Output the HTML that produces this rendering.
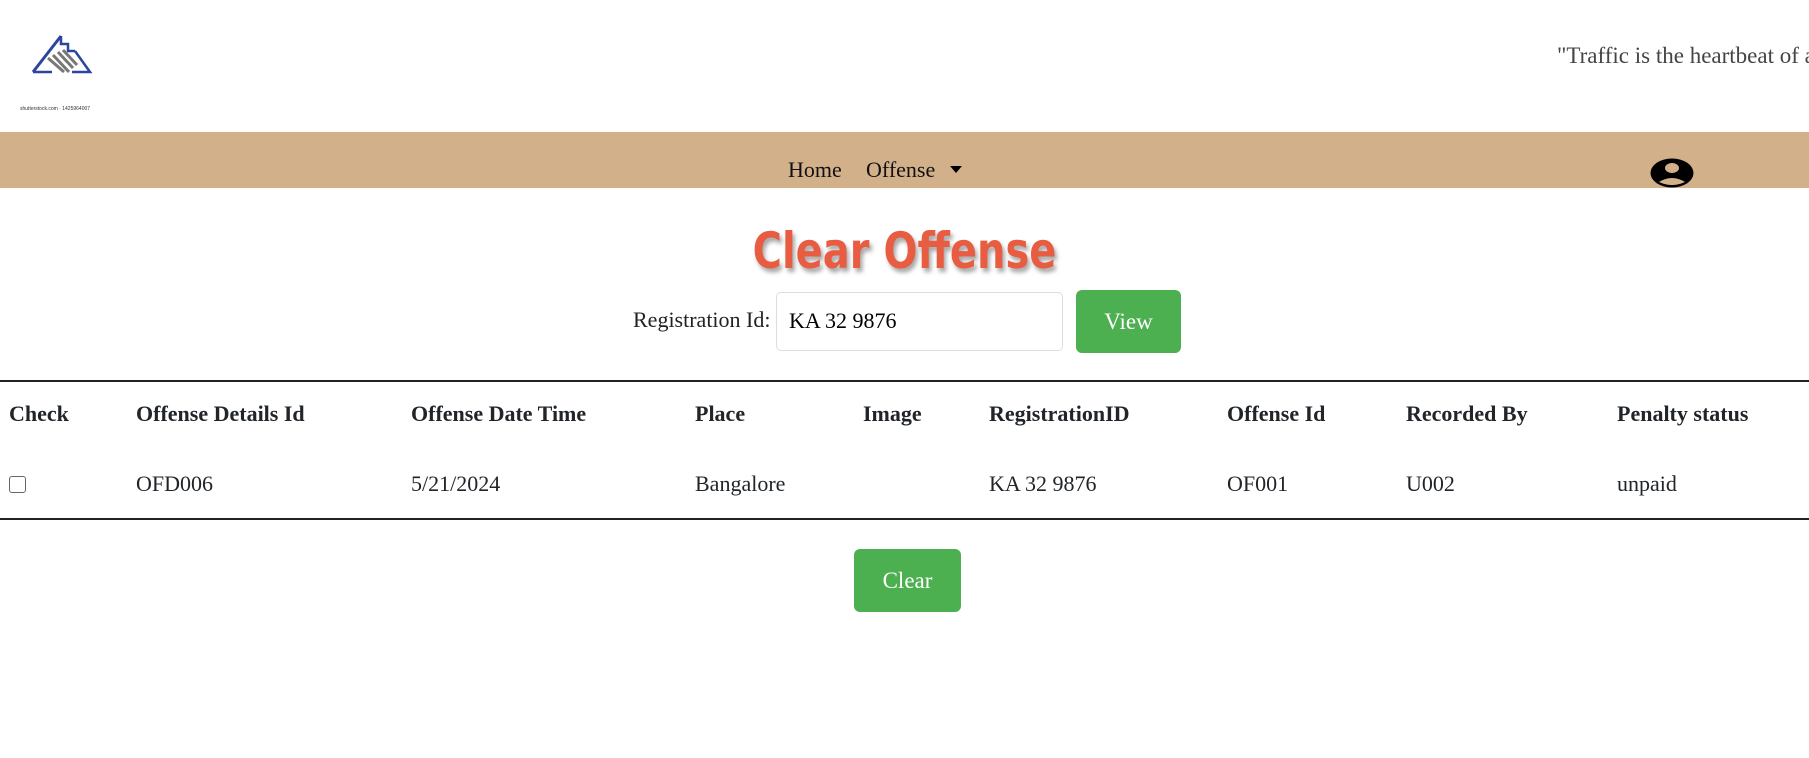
<!DOCTYPE html>
<html><head><meta charset="utf-8"><style>
*{margin:0;padding:0;box-sizing:border-box}
body{width:1809px;height:758px;background:#fff;font-family:"Liberation Serif",serif;position:relative;overflow:hidden;color:#212529}
.a{position:absolute;white-space:nowrap}
.nav{position:absolute;left:0;top:132px;width:1809px;height:56px;background:#d2b08a}
.th{font-weight:bold;font-size:22px;top:401px}
.td{font-size:22px;top:471px}
.btn{position:absolute;background:#4caf50;color:#fff;border-radius:6px;font-size:23px;display:flex;align-items:center;justify-content:center}
</style></head><body>
<svg class="a" style="left:30px;top:32px" width="64" height="44" viewBox="0 0 64 44">
<path d="M3 40 L31 4" stroke="#2b45a0" stroke-width="3" fill="none"/>
<path d="M31 4 L31 12 L38 12 L38 19 L45 19" stroke="#2b45a0" stroke-width="2.5" fill="none"/>
<path d="M45 19 L60 40 L42 40" stroke="#2b45a0" stroke-width="2.5" fill="none"/>
<path d="M3 40 L22 40" stroke="#2b45a0" stroke-width="2.5" fill="none"/>
<path d="M18 26 L34 40 M23 23 L39 40 M28 20 L43 36 M33 18 L47 33" stroke="#777" stroke-width="3" fill="none"/>
</svg>
<div class="a" style="left:20px;top:106px;font-size:5px;font-family:'Liberation Sans',sans-serif;color:#333">shutterstock.com · 1425964007</div>
<div class="a" style="left:1557px;top:43px;font-size:23px;color:#444">"Traffic is the heartbeat of a</div>
<div class="nav"></div>
<div class="a" style="left:788px;top:157px;font-size:22px;color:#111">Home</div>
<div class="a" style="left:866px;top:157px;font-size:22px;color:#111">Offense</div>
<div class="a" style="left:950px;top:166px;width:0;height:0;border-left:6px solid transparent;border-right:6px solid transparent;border-top:7px solid #000"></div>
<svg class="a" style="left:1650px;top:158px" width="44" height="30" viewBox="0 0 44 30">
<ellipse cx="22" cy="15" rx="21.5" ry="14.5" fill="#000"/>
<ellipse cx="22" cy="10" rx="7" ry="5" fill="#d2b08a"/>
<path d="M9 24 Q22 16 35 24 Q22 30 9 24Z" fill="#d2b08a"/>
</svg>
<div class="a" style="left:0;width:1809px;text-align:center;top:222px;font-size:50px;font-weight:bold;color:#e85c41;font-family:'Comic Sans MS','DejaVu Sans',sans-serif;text-shadow:3px 4px 5px rgba(0,0,0,0.35);transform:scaleX(0.8)">Clear Offense</div>
<div class="a" style="left:633px;top:307px;font-size:22px;color:#222">Registration Id:</div>
<div class="a" style="left:776px;top:292px;width:287px;height:59px;border:1px solid #ddd;border-radius:5px;font-size:22px;color:#000;padding:15px 12px">KA 32 9876</div>
<div class="btn" style="left:1076px;top:290px;width:105px;height:63px">View</div>
<div class="a" style="left:0;top:380px;width:1809px;height:2px;background:#222"></div>
<div class="a" style="left:0;top:518px;width:1809px;height:1.5px;background:#222"></div>
<div class="a th" style="left:9px">Check</div>
<div class="a th" style="left:136px">Offense Details Id</div>
<div class="a th" style="left:411px">Offense Date Time</div>
<div class="a th" style="left:695px">Place</div>
<div class="a th" style="left:863px">Image</div>
<div class="a th" style="left:989px">RegistrationID</div>
<div class="a th" style="left:1227px">Offense Id</div>
<div class="a th" style="left:1406px">Recorded By</div>
<div class="a th" style="left:1617px">Penalty status</div>
<div class="a" style="left:9px;top:476px;width:17px;height:17px;border:1.5px solid #666;border-radius:3px"></div>
<div class="a td" style="left:136px">OFD006</div>
<div class="a td" style="left:411px">5/21/2024</div>
<div class="a td" style="left:695px">Bangalore</div>
<div class="a td" style="left:989px">KA 32 9876</div>
<div class="a td" style="left:1227px">OF001</div>
<div class="a td" style="left:1406px">U002</div>
<div class="a td" style="left:1617px">unpaid</div>
<div class="btn" style="left:854px;top:549px;width:107px;height:63px">Clear</div>
</body></html>
